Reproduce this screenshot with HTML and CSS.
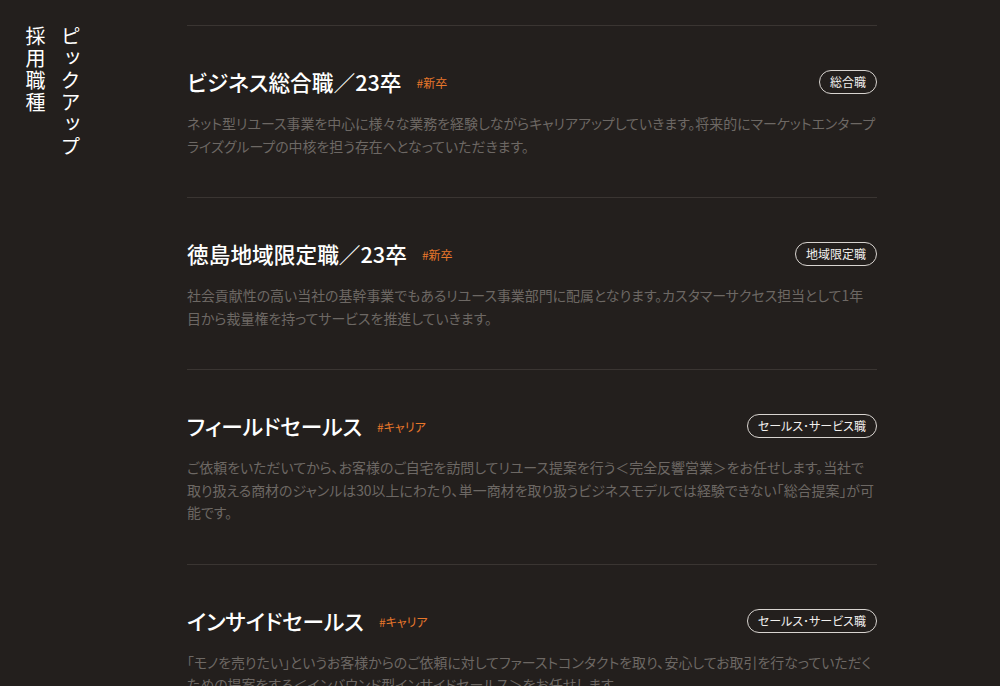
FILE: index.html
```html
<!DOCTYPE html>
<html lang="ja">
<head>
    <meta charset="UTF-8">
    <meta name="viewport" content="width=device-width, initial-scale=1.0">
    <title>ピックアップ採用職種</title>
    <link rel="stylesheet" href="styles.css">
</head>
<body>
    <div class="page">
        <!-- Vertical section heading -->
        <aside class="side">
            <h2 class="side-title">ピックアップ<br>採用職種</h2>
        </aside>

        <!-- Job list -->
        <main class="jobs">
            <article class="job">
                <div class="job-head">
                    <h3 class="job-title">ビジネス総合職／23卒</h3>
                    <span class="job-tag">#新卒</span>
                    <span class="job-badge">総合職</span>
                </div>
                <p class="job-text">ネット型リユース事業を中心に様々な業務を経験しながらキャリアアップしていきます。将来的にマーケットエンタープライズグループの中核を担う存在へとなっていただきます。</p>
            </article>

            <article class="job">
                <div class="job-head">
                    <h3 class="job-title">徳島地域限定職／23卒</h3>
                    <span class="job-tag">#新卒</span>
                    <span class="job-badge">地域限定職</span>
                </div>
                <p class="job-text">社会貢献性の高い当社の基幹事業でもあるリユース事業部門に配属となります。カスタマーサクセス担当として1年目から裁量権を持ってサービスを推進していきます。</p>
            </article>

            <article class="job">
                <div class="job-head">
                    <h3 class="job-title">フィールドセールス</h3>
                    <span class="job-tag">#キャリア</span>
                    <span class="job-badge">セールス･サービス職</span>
                </div>
                <p class="job-text">ご依頼をいただいてから､お客様のご自宅を訪問してリユース提案を行う＜完全反響営業＞をお任せします。当社で取り扱える商材のジャンルは30以上にわたり､単一商材を取り扱うビジネスモデルでは経験できない｢総合提案｣が可能です。</p>
            </article>

            <article class="job">
                <div class="job-head">
                    <h3 class="job-title">インサイドセールス</h3>
                    <span class="job-tag">#キャリア</span>
                    <span class="job-badge">セールス･サービス職</span>
                </div>
                <p class="job-text">｢モノを売りたい｣というお客様からのご依頼に対してファーストコンタクトを取り､安心してお取引を行なっていただくための提案をする＜インバウンド型インサイドセールス＞をお任せします。</p>
            </article>
        </main>
    </div>
</body>
</html>
```

FILE: styles.css
```css
/* General reset */
* {
    margin: 0;
    padding: 0;
    box-sizing: border-box;
}

body {
    font-family: "Noto Sans CJK JP", "Noto Sans", sans-serif;
    font-feature-settings: "palt";
    background-color: #231f1d;
    color: #fff;
    overflow: hidden;
}

.page {
    display: flex;
    padding-top: 25px;
}

/* Left vertical heading */
.side {
    width: 187px;
    flex-shrink: 0;
    padding-left: 18px;
}

.side-title {
    writing-mode: vertical-rl;
    font-feature-settings: normal;
    font-size: 20px;
    font-weight: 400;
    line-height: 35px;
    letter-spacing: 2px;
    padding-top: 1px;
}

/* Job list */
.jobs {
    width: 690px;
}

.job {
    border-top: 1px solid #3a3532;
    padding: 39px 0 40px;
}

.job-head {
    display: flex;
    align-items: center;
    height: 34px;
}

.job-title {
    font-size: 21.7px;
    font-weight: 500;
    line-height: 32px;
}

.job-tag {
    font-size: 12px;
    color: #e8772b;
    margin-left: 15px;
    padding-top: 1px;
}

.job-badge {
    margin-left: auto;
    font-size: 12px;
    line-height: 22px;
    padding: 0 10px;
    border: 1px solid #d8d4d0;
    border-radius: 12px;
    color: #f2f0ee;
}

.job-text {
    margin-top: 13px;
    font-size: 13.95px;
    line-height: 22.5px;
    color: #6d6864;
}
```
